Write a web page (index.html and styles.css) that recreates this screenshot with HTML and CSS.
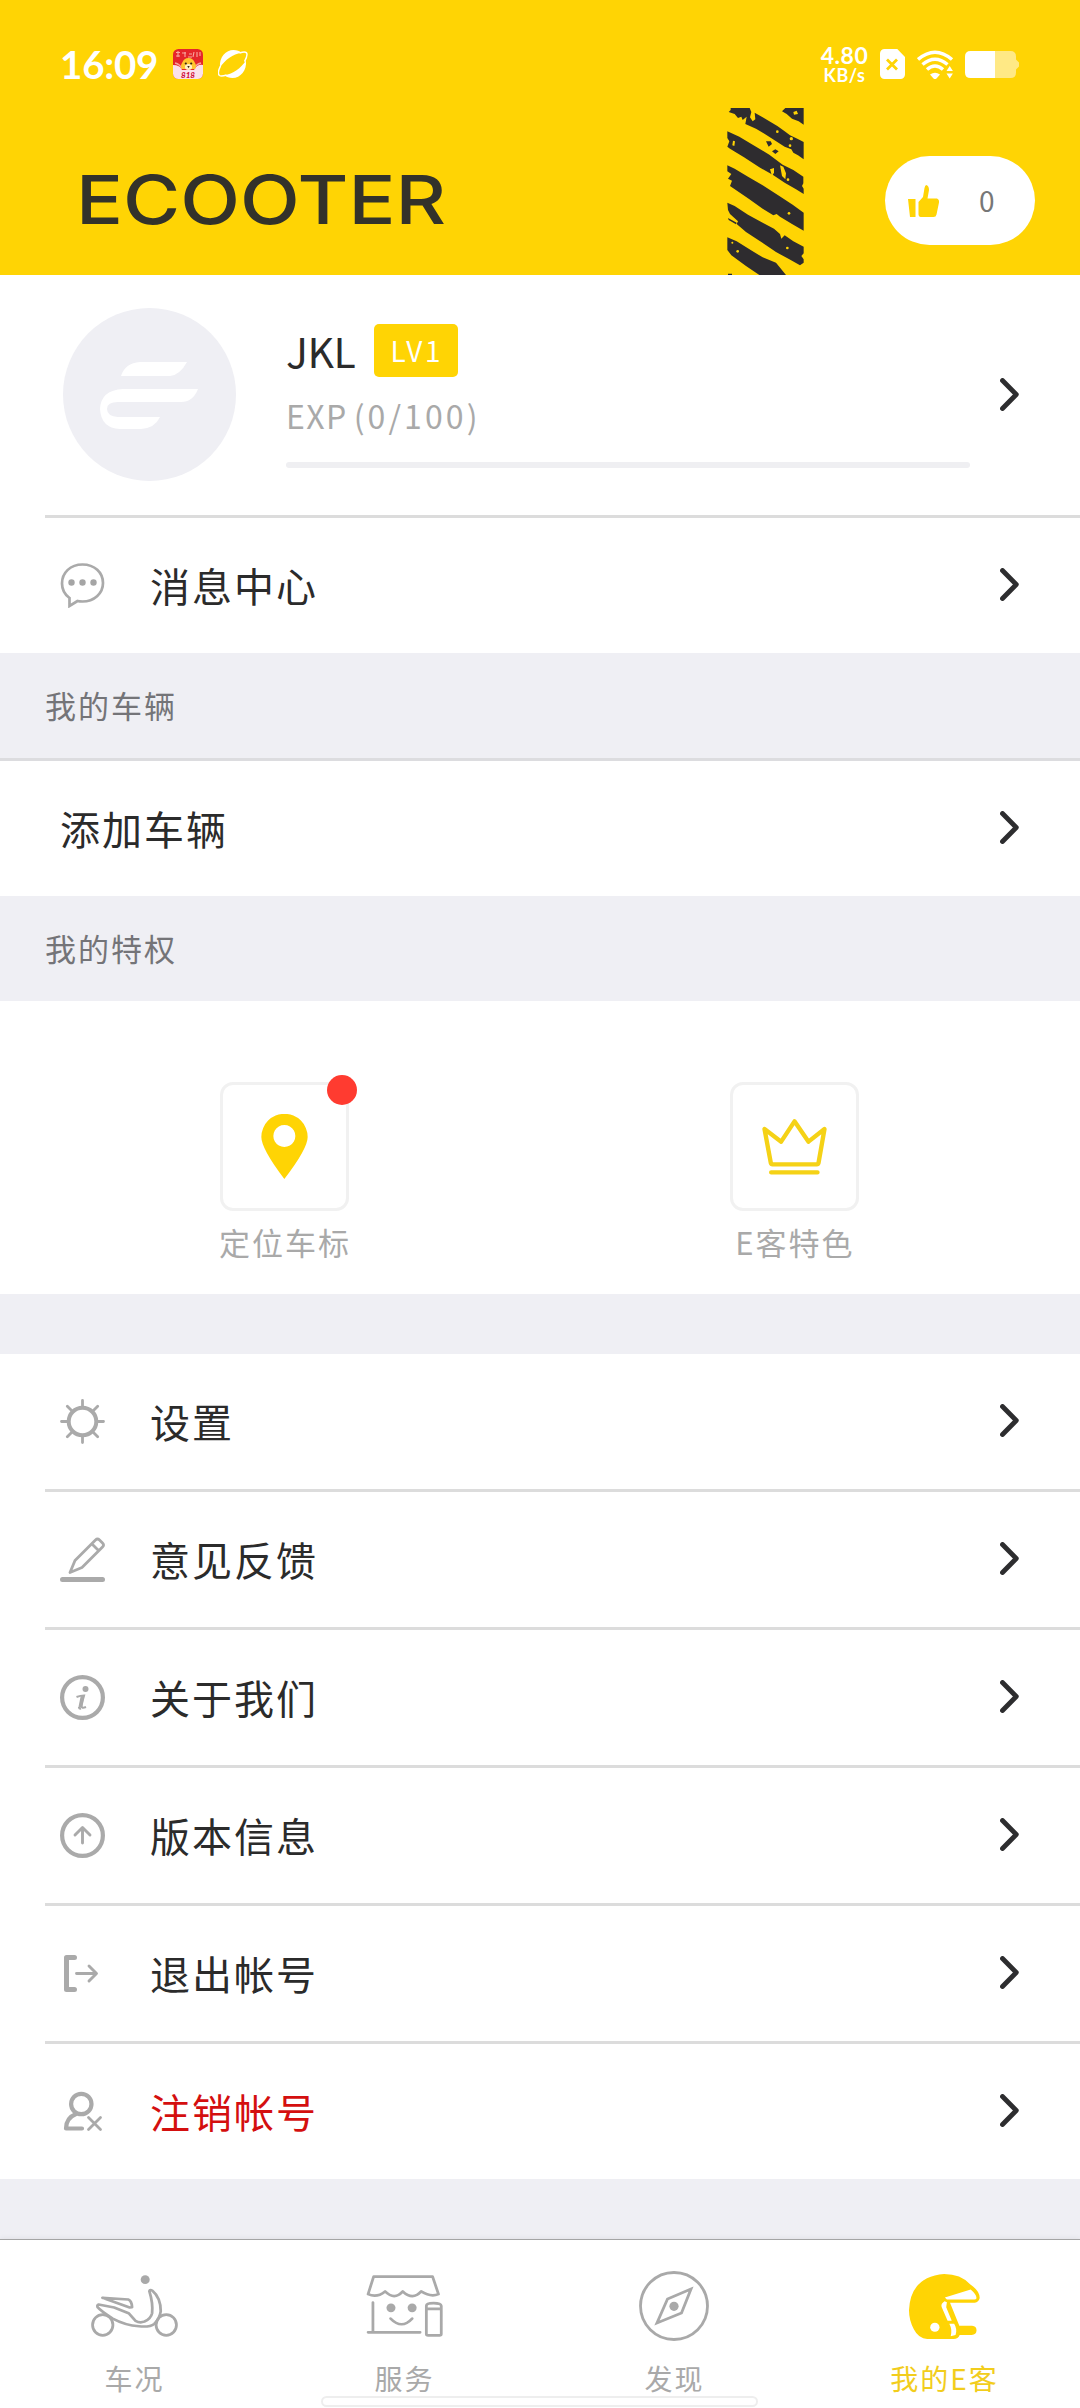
FILE: index.html
```html
<!DOCTYPE html>
<html lang="zh-CN">
<head>
<meta charset="utf-8">
<meta name="viewport" content="width=1080">
<title>我的E客</title>
<link rel="stylesheet" href="styles.css">
</head>
<body>
<svg class="defs" width="0" height="0" aria-hidden="true">
  <symbol id="chevron" viewBox="0 0 19 33"><path d="M2.500 2.500 16.300 16.500 2.500 30.500" fill="none" stroke="#2d2d2f" stroke-width="4.800" stroke-linecap="round" stroke-linejoin="round"/></symbol>
</svg>
<div class="app">
  <header class="header">
    <div class="status">
      <div class="status-left">
        <span class="clock">16:09</span>
        <svg class="app-badge" width="30" height="30" viewBox="0 0 30 30">
          <defs><clipPath id="badge"><rect width="30" height="30" rx="5.5"/></clipPath></defs>
          <g clip-path="url(#badge)">
            <rect width="30" height="30" fill="#e5262b"/>
            <path d="M3 3.500h4M5 2v6M9 4h4M12 3v5M16 5h3M21 3l-1 5M24 3v5M27 3v4M3 7h4M15 8h4" stroke="#f8a9a0" stroke-width="1.100"/>
            <path d="M0 16q7 0 9 5h12q3-6 9-5v14H0z" fill="#fbe1ea"/>
            <path d="M2 14q5 1 7 6M28 14q-5 1-7 6" fill="none" stroke="#f6a49c" stroke-width="1.500"/>
            <path d="M9 20q-2-3 0-6 2-5 6.500-5t6.500 5q2 3 0 6z" fill="#ffc52e"/>
            <ellipse cx="15.500" cy="18" rx="3.600" ry="3" fill="#fff0c2"/>
            <circle cx="12.800" cy="14.500" r="1.100" fill="#3a2410"/><circle cx="18.200" cy="14.500" r="1.100" fill="#3a2410"/>
            <path d="M14.300 17h2.400l-1.200 2.300z" fill="#3a2410"/>
            <text x="15" y="29" text-anchor="middle" class="badge-num">818</text>
          </g>
        </svg>
        <svg class="planet" width="30" height="28" viewBox="0 0 30 28">
          <path d="M2 17.500C1 7 8 0 15.500 0c3.500 0 6 1 8 2.800C15 4 7 10 2 17.500z" fill="#fff"/>
          <path d="M28 10.500c1 10-5.500 17.500-13.500 17.500-3.500 0-6-1-8-2.800C15 24 23 18 28 10.500z" fill="#fff"/>
          <path d="M2.500 16C.5 20-.5 24 1.500 25.500c1.500 1 4 .5 7-.5M21.500 3c3-1 5.500-1.500 6.800-.4 1.500 1.600.4 5-1.800 9" fill="none" stroke="#fff" stroke-width="1.500"/>
        </svg>
      </div>
      <div class="status-right">
        <div class="speed"><span class="speed-num">4.80</span><span class="speed-unit">KB/s</span></div>
        <svg class="sim" width="25" height="30" viewBox="0 0 25 30"><path d="M4.500 0h12.800L25 8v17.500A4.500 4.500 0 0 1 20.500 30h-16A4.500 4.500 0 0 1 0 25.500v-21A4.500 4.500 0 0 1 4.500 0z" fill="#fff"/><path d="M7 10.500 17 20.500M17 10.500 7 20.500" stroke="#ffd404" stroke-width="2.800"/></svg>
        <svg class="wifi" width="37" height="29" viewBox="0 0 37 29">
          <g fill="none" stroke="#fff" stroke-width="3.500"><path d="M1 9.500Q18 -5 35 9.500"/><path d="M5.500 14.500Q18 4 30.500 14.500"/><path d="M10 19.500Q18 12.500 26 19.500"/></g>
          <path d="M13 24.500q5-3.500 10 0l-3.500 4q-1.500 1-3 0z" fill="#fff"/><path d="M29.500 21l3.200-5 3.200 5zM29.500 23.500l3.200 5 3.200-5z" fill="#fff"/>
        </svg>
        <svg width="54" height="27" viewBox="0 0 54 27">
          <path d="M30 0h15.500q5.500 0 5.500 5.500v3l3 3v4l-3 3v3q0 5.500-5.500 5.500H30z" fill="#ffe985"/>
          <path d="M5.500 0H30v27H5.500Q0 27 0 21.500v-16Q0 0 5.500 0z" fill="#fff"/>
        </svg>
      </div>
    </div>
    <div class="brand-bar">
      <svg class="brand" width="370" height="80" viewBox="0 0 370 80" role="img" aria-label="ECOOTER"><text x="-4" y="64" textLength="370" lengthAdjust="spacingAndGlyphs">ECOOTER</text></svg>
      <svg class="hazard" width="77" height="167" viewBox="33 24 231 501" preserveAspectRatio="none">
        <g fill="#2e2c2f">
          <path d="M44 24H101L106 36 102 52 110 64 118 58 116 38 140 52 184 78 206 94 222 106 244 116 263 126V178L246 166 232 158 226 148 206 140 178 122 150 104 120 86 88 72 92 50 80 60 76 50 66 54 56 42 38 36 44 30z"/>
          <path d="M198 34L208 24H263V74L248 64 228 56 212 42z"/>
          <path d="M34 94L70 110 110 134 160 164 200 194 232 210 262 230V250L258 258 263 266V282L240 268 206 248 170 224 130 202 84 172 42 146 34 140 40 124 34 114z"/>
          <path d="M34 196L56 206 96 230 140 256 190 288 230 314 263 338V392L228 372 192 350 182 342 172 346 140 326 98 296 42 258 48 242 36 236 46 222 34 214z"/>
          <path d="M34 308L56 318 96 344 140 368 174 386 192 402 196 416 206 406 232 424 263 440V460L256 468 263 478V488L252 496 220 478 180 456 130 422 90 396 62 372 66 364 42 342 36 330z"/>
          <path d="M34 412L62 424 104 450 140 472 180 488 210 525H130L90 498 46 466 34 450z"/>
          <path d="M150 124L164 124 168 132 158 140zM168 154L178 148 188 154 178 162zM36 354L62 368 60 373 38 360zM36 521h12v4H36z"/>
        </g>
        <g fill="#ffd404"><circle cx="184" cy="95" r="4"/><circle cx="226" cy="116" r="5"/><circle cx="222" cy="137" r="4"/><path d="M51 122l6 2-2 14-6-2zM232 36l10-4 4 10-12 2zM192 196l10 4 8 20-2 18-10-10zM162 208l12-4 0 14-6 10z"/><circle cx="216" cy="239" r="4"/><circle cx="219" cy="340" r="4"/><circle cx="214" cy="444" r="4"/><circle cx="65" cy="454" r="4"/><circle cx="49" cy="428" r="3"/></g>
      </svg>
      <div class="likes">
        <svg width="31" height="32" viewBox="0 0 31 32" fill="#ffd404"><path d="M0 14h7.500v18H2zM10.500 17l4.500-5 1.500-9Q17 0 18.500 0q2.500 1 2.500 5l-1.500 8.500H29q2.500 1 2 4l-2.500 12Q28 32 25.500 32h-13q-2-.5-2-2.500z"/></svg>
        <span>0</span>
      </div>
    </div>
  </header>

  <section class="profile">
    <svg class="avatar" width="173" height="173" viewBox="0 0 173 173">
      <circle cx="86.500" cy="86.500" r="86.500" fill="#efeff4"/>
      <path d="M58 68q4-13 19-14h47q-7 13-17 14zM135 81H60q-22 1-23 20 1 19 20 20h21q14-1 19-12H55q-11-1-11-8 0-7 11-7h63q12 0 17-13z" fill="#fff"/>
    </svg>
    <div class="profile-info">
      <div class="name-line"><span class="name">JKL</span><span class="level">LV1</span></div>
      <div class="exp">EXP<span class="exp-val">(0/100)</span></div>
      <div class="progress"></div>
    </div>
    <svg class="chev" width="19" height="33"><use href="#chevron"/></svg>
  </section>
  <div class="row row-message">
    <svg class="icon" width="45" height="45" viewBox="0 0 45 45" fill="none" stroke="#aaa" stroke-width="2.700"><path d="M9.500 43v-8Q2 29.500 2 20.500C2 9.500 10.500 1.500 22.500 1.500S43 9.500 43 20 34 38.500 22.500 38.500q-3 0-5-.5z"/><g fill="#a5a5a5" stroke="none"><circle cx="11.500" cy="19.500" r="3.200"/><circle cx="22.500" cy="19.500" r="3.200"/><circle cx="33.500" cy="19.500" r="3.200"/></g></svg>
    <span class="label">消息中心</span><svg class="chev" width="19" height="33"><use href="#chevron"/></svg>
  </div>
  <h2 class="section-title ruled">我的车辆</h2>
  <div class="row row-plain"><span class="label">添加车辆</span><svg class="chev" width="19" height="33"><use href="#chevron"/></svg></div>
  <h2 class="section-title">我的特权</h2>
  <section class="perks">
    <div class="perk">
      <div class="tile">
        <svg width="47" height="65" viewBox="246 221 139 195"><path fill-rule="evenodd" d="M315 416Q246 325 246 290a69.500 69.500 0 0 1 139 0q0 35-70 126zM315 254a33 33 0 1 0 .1 0z" fill="#ffd404"/></svg>
        <i class="dot"></i>
      </div>
      <span>定位车标</span>
    </div>
    <div class="perk">
      <div class="tile">
        <svg width="65" height="56" viewBox="248 239 194 168" fill="none" stroke="#f5d216" stroke-width="13" stroke-linecap="round" stroke-linejoin="round"><path d="M255 269l50 38 40-61 42 61 48-38-18 102q-1 4-5 4H279q-4 0-5-4zM275 399h139"/></svg>
      </div>
      <span>E客特色</span>
    </div>
  </section>

  <nav class="menu">
    <div class="row">
      <svg class="icon" width="45" height="45" viewBox="0 0 45 45" fill="none" stroke="#aaa" stroke-width="2.800" stroke-linecap="round"><circle cx="22.500" cy="22.500" r="13.800" stroke-width="4"/><path d="M22.500 1.500V8M22.500 37v6.500M1.500 22.500H8M37 22.500h6.500M7.300 7.300l4.500 4.500M33.200 33.200l4.500 4.500M7.300 37.700l4.500-4.500M33.200 11.800l4.500-4.500"/></svg>
      <span class="label">设置</span><svg class="chev" width="19" height="33"><use href="#chevron"/></svg>
    </div>
    <div class="row">
      <svg class="icon" width="45" height="45" viewBox="0 0 45 45" fill="none" stroke="#aaa" stroke-width="2.800" stroke-linejoin="round"><path d="M10 35.500l5-12L35.500 3q2-2 4 0l3 3q2 2 0 4L22 30.500z M32 7l7 7"/><path d="M2.500 42.500h40" stroke-width="5" stroke-linecap="round"/></svg>
      <span class="label">意见反馈</span><svg class="chev" width="19" height="33"><use href="#chevron"/></svg>
    </div>
    <div class="row">
      <svg class="icon" width="45" height="45" viewBox="0 0 45 45"><circle cx="22.500" cy="22.500" r="20.400" fill="none" stroke="#aaa" stroke-width="4.200"/><circle cx="25.500" cy="14" r="3" fill="#aaa"/><path d="M16.500 22q4-1.500 7.500-1.500-1.500 5-2.500 10-.5 3.500 4.500 1.500M21 33.500q-2 .5-2-1.500" fill="none" stroke="#aaa" stroke-width="2.200"/><path d="M22.500 21l-2.300 11.500" fill="none" stroke="#aaa" stroke-width="3.600"/></svg>
      <span class="label">关于我们</span><svg class="chev" width="19" height="33"><use href="#chevron"/></svg>
    </div>
    <div class="row">
      <svg class="icon" width="45" height="45" viewBox="0 0 45 45" fill="none" stroke="#aaa" stroke-linecap="round" stroke-linejoin="round"><circle cx="22.500" cy="22.500" r="20.400" stroke-width="4.200"/><path d="M22.500 30V15M15 22l7.500-7.500L30 22" stroke-width="2.900"/></svg>
      <span class="label">版本信息</span><svg class="chev" width="19" height="33"><use href="#chevron"/></svg>
    </div>
    <div class="row">
      <svg class="icon" width="45" height="45" viewBox="0 0 45 45" fill="none" stroke="#aaa" stroke-linecap="round" stroke-linejoin="round"><path d="M14.500 6.500h-8v32h8" stroke-width="5"/><path d="M16.500 22.500h19M29 15l7.500 7.500L29 30" stroke-width="2.900"/></svg>
      <span class="label">退出帐号</span><svg class="chev" width="19" height="33"><use href="#chevron"/></svg>
    </div>
    <div class="row">
      <svg class="icon" width="45" height="45" viewBox="0 0 45 45" fill="none" stroke="#aaa" stroke-linecap="round" stroke-linejoin="round"><circle cx="21.300" cy="15" r="10.200" stroke-width="4.200"/><path d="M22 39.500H6Q6 29 16 25" stroke-width="4.200"/><path d="M28.500 28.500l12 12M40.500 28.500l-12 12" stroke-width="2.800"/></svg>
      <span class="label danger">注销帐号</span><svg class="chev" width="19" height="33"><use href="#chevron"/></svg>
    </div>
  </nav>

  <footer class="tabs">
    <div class="tab">
      <div class="tab-icon"><svg width="87" height="62" viewBox="263 164 252 185" preserveAspectRatio="none" fill="none" stroke="#a9a9a9" stroke-width="8" stroke-linejoin="round"><circle cx="420" cy="178" r="13" fill="#a9a9a9" stroke="none"/><ellipse cx="297" cy="313" rx="29.500" ry="31"/><ellipse cx="481" cy="313" rx="29.500" ry="31"/><path d="M296 232l75 5q10 4 11 23l-7 1zM285 252l45 9 42 17q12 14 20 23 12 7 26 2 18-8 22-25 3-30-8-66 2-6 9-1 24 21 24 61-3 23-19 38-12 10-44 7-40-3-76-23-34-22-44-34-2-6 3-8z"/></svg></div>
      <span>车况</span>
    </div>
    <div class="tab">
      <div class="tab-icon"><svg width="77" height="62" viewBox="1065 164 222 185" preserveAspectRatio="none" fill="none" stroke="#a9a9a9" stroke-width="8" stroke-linecap="round" stroke-linejoin="round"><path d="M1087 169h170l17 52q-22 10-50-8-24 28-53 0-24 28-51 0-24 20-49 8zM1085 246v88M1071 335h150M1136 294q32 34 62 0M1239 256q0-8 21-8t22 8v84q0 4-5 4h-33q-5 0-5-4zM1240 265h41"/><g fill="#a9a9a9" stroke="none"><circle cx="1137" cy="262" r="13"/><circle cx="1198" cy="262" r="13"/></g></svg></div>
      <span>服务</span>
    </div>
    <div class="tab">
      <div class="tab-icon"><svg width="70" height="70" viewBox="0 0 70 70" fill="none" stroke="#a9a9a9" stroke-width="2.800"><circle cx="35" cy="35" r="33.500"/><path d="M52 18L28.500 28 18 52 42.500 42z"/><circle cx="35" cy="35.300" r="4.600" fill="#a9a9a9" stroke="none"/></svg></div>
      <span>发现</span>
    </div>
    <div class="tab active">
      <div class="tab-icon"><svg width="71" height="65" viewBox="1073 161 206 193" preserveAspectRatio="none"><path d="M1175 161q48 0 76 31 28 20 27 41-3 12-14 13h-72l27 69h37q13 1 13 14-1 13-14 13h-35q-4 12-18 12h-76q-25-1-39-29-14-26-14-56 4-100 102-108z" fill="#ffd404"/><path d="M1177 231l75-24q18 16 17 26-2 4-6 4h-80zM1176 242q-12 8-8 18l17 40h12l-16-40q1-10 2-15zM1190 309l14 0q10 16 4 33l-14 4q5-20-4-37z" fill="#fff"/><circle cx="1148" cy="319" r="13.500" fill="#fff"/></svg></div>
      <span>我的E客</span>
    </div>
    <div class="home-indicator"></div>
  </footer>
</div>
</body>
</html>
```
FILE: styles.css
```css
* { box-sizing: border-box; margin: 0; padding: 0; }
body { width: 1080px; background: #efeff4; font-family: "Noto Sans CJK SC", "Noto Sans", sans-serif; color: #2b2b2b; }
svg { display: block; flex: none; }
.defs { position: absolute; }
.app { display: flex; flex-direction: column; width: 1080px; height: 2408px; background: #efeff4; }

.header { height: 275px; background: #ffd404; display: flex; flex-direction: column; }
.status { height: 108px; padding: 44px 61px 0 60px; display: flex; justify-content: space-between; align-items: flex-start; color: #fff; font-family: Lato, sans-serif; }
.status-left, .status-right { display: flex; align-items: center; height: 40px; }
.clock { font-size: 38.5px; font-weight: 700; line-height: 40px; width: 98px; letter-spacing: -.2px; white-space: nowrap; padding-bottom: 1px; }
.app-badge { margin-left: 15px; }
.badge-num { font: italic 900 8px Lato, sans-serif; fill: #d0103c; }
.planet { margin-left: 15px; }
.speed { display: flex; flex-direction: column; align-items: center; font-weight: 700; width: 49px; }
.speed-num { font-size: 23px; line-height: 22px; letter-spacing: .5px; }
.speed-unit { font-size: 18px; line-height: 18px; letter-spacing: .5px; }
.sim { margin-left: 11px; }
.wifi { margin: 0 11px 0 12px; }
.brand-bar { height: 167px; padding: 0 45px 0 80px; display: flex; align-items: flex-start; }
.brand { margin-top: 52px; }
.brand text { font-family: Inter, sans-serif; font-size: 67px; font-weight: 500; fill: #33322a; }
.hazard { margin-left: 277px; }
.likes { width: 150px; height: 89px; margin: 48px 0 0 81px; border-radius: 45px; background: #fff; display: flex; align-items: center; padding-left: 23px; }
.likes span { margin-left: 40px; font-size: 28px; color: #777; line-height: 40px; padding-bottom: 1px; }

.profile { height: 243px; background: linear-gradient(#dcdcdc, #dcdcdc) 45px 240px / 1035px 3px no-repeat #fff; padding: 33px 60px 0 63px; display: flex; }
.profile-info { width: 684px; margin: 16px 0 0 50px; }
.name-line { display: flex; align-items: center; height: 53px; }
.name { width: 88px; font-size: 41px; line-height: 53px; letter-spacing: -.5px; }
.level { width: 84px; height: 53px; border-radius: 5px; background: #ffd404; color: #fff; font-size: 28px; line-height: 53px; letter-spacing: 2.8px; text-align: center; padding-left: 2px; }
.exp { margin-top: 16px; height: 44px; font-size: 32px; line-height: 44px; letter-spacing: 1.4px; color: #a9a9a9; }
.exp-val { margin-left: 6px; letter-spacing: 3.1px; }
.progress { height: 6px; margin-top: 25px; border-radius: 3px; background: #efeff2; }
.profile .chev { margin: 70px 0 0 30px; }

.row { height: 138px; flex: none; padding: 0 61px 3px 60px; display: flex; align-items: center; background: linear-gradient(#dcdcdc, #dcdcdc) 45px 135px / 1035px 3px no-repeat #fff; }
.row-message, .row-plain, .row:last-child { height: 135px; padding-bottom: 0; background: #fff; }
.icon { margin-right: 45px; }
.label { font-size: 40px; letter-spacing: 2px; line-height: 56px; flex: 1; padding-bottom: 1px; }
.row .chev { margin-bottom: 2px; }
.danger { color: #d40f0f; }
.section-title { height: 105px; padding-left: 45px; font-size: 31px; font-weight: 400; letter-spacing: 2px; line-height: 104px; color: #747478; }
.section-title.ruled { height: 108px; border-bottom: 3px solid #dcdcdf; }

.perks { height: 293px; background: #fff; padding: 81px 31px 0 29px; display: grid; grid-template-columns: 1fr 1fr; }
.perk { display: flex; flex-direction: column; align-items: center; font-size: 31px; letter-spacing: 2px; line-height: 44px; color: #a9a9a9; }
.perk span { margin-top: 9px; padding-left: 2px; }
.tile { position: relative; width: 129px; height: 129px; border: 3px solid #f1f1f1; border-radius: 13px; display: flex; align-items: center; justify-content: center; }
.dot { position: absolute; right: -11px; top: -10px; width: 30px; height: 30px; border-radius: 50%; background: #ff3b30; }

.menu { margin-top: 60px; }
.tabs { position: relative; margin-top: 60px; height: 169px; border-top: 1px solid #a5a5a5; background: #fff; display: grid; grid-template-columns: repeat(4, 1fr); box-shadow: 0 -1px 5px rgba(0,0,0,.06); }
.tab { display: flex; flex-direction: column; align-items: center; color: #a9a9a9; font-size: 28px; letter-spacing: 2px; line-height: 40px; }
.tab-icon { height: 118px; padding-top: 14px; display: flex; align-items: center; margin-left: -2px; }
.tab span { margin-left: -1px; }
.active { color: #f2cd1c; }
.home-indicator { position: absolute; left: 321px; top: 156px; width: 437px; height: 11px; border-radius: 6px; background: #fff; border: 2px solid #eee; }
```
